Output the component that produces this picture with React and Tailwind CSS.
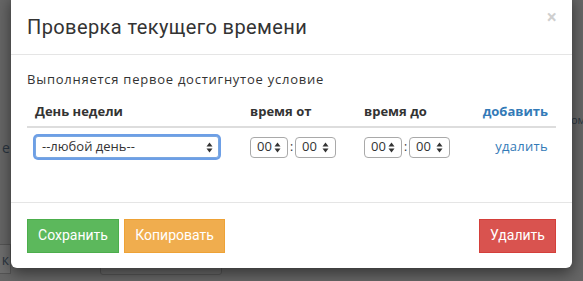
import React from "react";

function Arrows() {
  return (
    <svg width="7" height="11" viewBox="0 0 7 11" className="shrink-0">
      <path d="M3.5 0.5 L6.5 4.5 L0.5 4.5 Z" fill="#333" />
      <path d="M3.5 10.5 L6.5 6.5 L0.5 6.5 Z" fill="#333" />
    </svg>
  );
}

function TimeSelect({ w }) {
  return (
    <div
      className={`flex items-center justify-between h-[21px] ${w} px-[6px] rounded-[4px] border border-[#a9a9a9] bg-white text-[13px] text-[#333]`}
    >
      <span>00</span>
      <Arrows />
    </div>
  );
}

function TimePair() {
  return (
    <div className="flex items-center">
      <TimeSelect w="w-[38px]" />
      <span className="w-[7px] text-center text-[12px] leading-none">:</span>
      <TimeSelect w="w-[41px]" />
    </div>
  );
}

export default function App() {
  return (
    <div
      className="relative w-[583px] h-[281px] overflow-hidden bg-[#666666]"
      style={{ fontFamily: "'Open Sans', 'DejaVu Sans', sans-serif" }}
    >
      {/* page behind the overlay */}
      <div className="absolute left-[2px] top-[137px] text-[14px] text-[#2a3540]">е</div>
      <div className="absolute left-[571px] top-[112px] text-[11px] text-[#2a3540]">ом</div>
      <div className="absolute left-[-20px] top-[244px] w-[31px] h-[30px] border border-[#555] bg-[#6e6e6e] flex items-center justify-end pr-[1px] text-[14px] text-[#2a3540]">
        к
      </div>
      <div className="absolute left-[100px] top-[262px] w-[122px] h-[13px] rounded-[3px] border border-[#555] bg-[#6a6a6a]" />

      {/* modal */}
      <div className="absolute left-[11px] top-[-6px] w-[561px] h-[274px] rounded-[6px] bg-white shadow-[0_5px_15px_rgba(0,0,0,0.5)] flex flex-col text-[#333]">
        <div className="flex items-center justify-between h-[61px] px-[16px] border-b border-[#e5e5e5]">
          <h4
            className="text-[20px] font-normal tracking-[0.4px] text-[#333] pt-[5px]"
            style={{ fontFamily: "Roboto, 'Liberation Sans', sans-serif" }}
          >
            Проверка текущего времени
          </h4>
          <span className="text-[19px] font-bold leading-none text-[#cfcfcf] mr-[-1px] mb-[14px]">×</span>
        </div>

        <div className="px-[16px] pt-[15px] h-[147px] text-[13px]">
          <div className="leading-[18px] tracking-[0.75px]">Выполняется первое достигнутое условие</div>
          <div className="mt-[10px] grid grid-cols-[215px_114px_114px_1fr] border-b-2 border-[#ddd] font-bold h-[30px] items-center">
            <div className="px-[8px]">День недели</div>
            <div className="px-[8px]">время от</div>
            <div className="px-[8px]">время до</div>
            <div className="px-[8px] text-right text-[#337ab7]">добавить</div>
          </div>
          <div className="grid grid-cols-[215px_114px_114px_1fr] h-[38px] items-center">
            <div className="px-[8px]">
              <div className="flex items-center justify-between h-[22px] w-[184px] pl-[6px] pr-[5px] rounded-[3px] border border-[#7aa7e0] bg-white shadow-[0_0_0_2px_#6d9fe6]">
                <span>--любой день--</span>
                <Arrows />
              </div>
            </div>
            <div className="px-[8px]">
              <TimePair />
            </div>
            <div className="px-[8px]">
              <TimePair />
            </div>
            <div className="px-[8px] text-right text-[#337ab7] tracking-[0.3px]">удалить</div>
          </div>
        </div>

        <div
          className="flex items-center justify-between flex-1 px-[16px] border-t border-[#e5e5e5]"
          style={{ fontFamily: "Roboto, 'Liberation Sans', sans-serif" }}
        >
          <div className="flex gap-[5px]">
            <button className="h-[34px] w-[92px] bg-[#5cb85c] border border-[#4cae4c] text-white text-[14px]">
              Сохранить
            </button>
            <button className="h-[34px] w-[101px] bg-[#f0ad4e] border border-[#eea236] text-white text-[14px]">
              Копировать
            </button>
          </div>
          <button className="h-[34px] w-[77px] bg-[#d9534f] border border-[#d43f3a] text-white text-[14px]">
            Удалить
          </button>
        </div>
      </div>
    </div>
  );
}
